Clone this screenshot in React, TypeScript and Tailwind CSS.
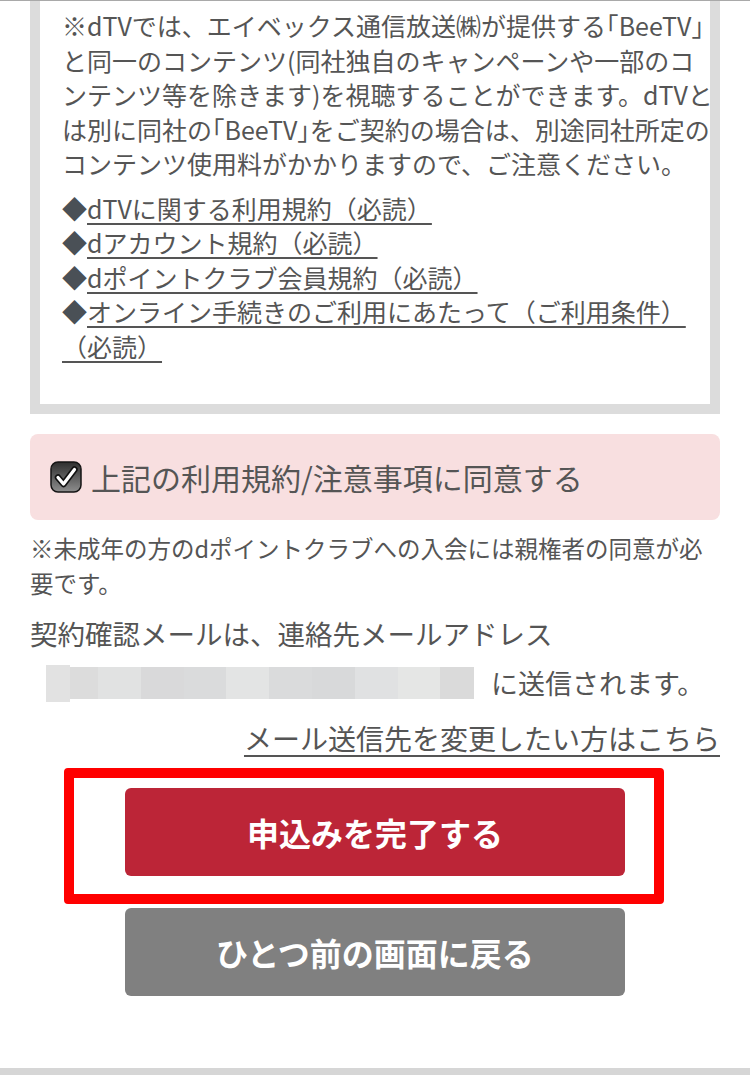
import type { ReactNode } from 'react';

// half-width bracket, as the reference renders 「」 narrow
function Br({ children }: { children: ReactNode }) {
  return <span className="[font-feature-settings:'halt']">{children}</span>;
}

const terms: Array<ReactNode> = [
  'dTVに関する利用規約（必読）',
  'dアカウント規約（必読）',
  'dポイントクラブ会員規約（必読）',
];

const mosaic: Array<{ w: number; c: string; tall?: boolean }> = [
  { w: 24, c: '#e2e2e2', tall: true },
  { w: 28, c: '#dcdcdc' },
  { w: 43, c: '#e1e2e2' },
  { w: 43, c: '#d9d9da' },
  { w: 42, c: '#dadbdc' },
  { w: 43, c: '#e3e4e4' },
  { w: 43, c: '#dadbdc' },
  { w: 43, c: '#d8d9da' },
  { w: 43, c: '#e0e1e2' },
  { w: 42, c: '#e5e6e5' },
  { w: 34, c: '#dadada' },
];

function CheckIcon() {
  return (
    <svg width="32" height="32" viewBox="0 0 32 32" className="shrink-0">
      <defs>
        <linearGradient id="cb-bg" x1="0" y1="0" x2="0" y2="1">
          <stop offset="0" stopColor="#2e2e2e" />
          <stop offset="1" stopColor="#8e8e8e" />
        </linearGradient>
      </defs>
      <rect x="1" y="1" width="30" height="30" rx="7" fill="url(#cb-bg)" stroke="#151515" strokeWidth="1.5" />
      <path d="M8 16.5 L13.5 23 L24.5 8.5" fill="none" stroke="#111" strokeWidth="6.5" strokeLinecap="round" strokeLinejoin="round" />
      <path d="M8 16.5 L13.5 23 L24.5 8.5" fill="none" stroke="#fff" strokeWidth="3.2" strokeLinecap="round" strokeLinejoin="round" />
    </svg>
  );
}

export default function App() {
  return (
    <div className="w-[750px] bg-white font-['Noto_Sans_CJK_JP',sans-serif] text-[#555]">
      <div className="h-px bg-[#a9a9a9]" />

      <div className="flex flex-col px-[30px]">
        {/* Terms frame (scrolled, top cut off) */}
        <div className="border-x-[10px] border-b-[10px] border-[#dcdcdc] pl-[22px] pr-[2px] pt-[7px] pb-[41px] text-[25px] leading-[34.5px]">
          <p className="whitespace-nowrap">
            ※dTVでは、エイベックス通信放送㈱が提供する<Br>「</Br>BeeTV<Br>」</Br>
            <br />
            と同一のコンテンツ(同社独自のキャンペーンや一部のコ
            <br />
            ンテンツ等を除きます)を視聴することができます。dTVと
            <br />
            は別に同社の<Br>「</Br>BeeTV<Br>」</Br>をご契約の場合は、別途同社所定の
            <br />
            コンテンツ使用料がかかりますので、ご注意ください。
          </p>

          <div className="mt-[10px] whitespace-nowrap">
            {terms.map((t, i) => (
              <p key={i}>
                <span className="text-[#4a5056]">◆</span>
                <a className="underline underline-offset-[4px]">{t}</a>
              </p>
            ))}
            <p>
              <span className="text-[#4a5056]">◆</span>
              <a className="underline underline-offset-[4px]">
                オンライン手続きのご利用にあたって（ご利用条件）
                <br />
                （必読）
              </a>
            </p>
          </div>
        </div>

        {/* Agreement */}
        <label className="mt-[20px] flex h-[86px] items-center gap-[9px] rounded-[8px] bg-[#f8dfe0] pl-[20px]">
          <CheckIcon />
          <span className="text-[30px] leading-none">上記の利用規約/注意事項に同意する</span>
        </label>

        <p className="mt-[11px] whitespace-nowrap text-[23.5px] leading-[35px]">
          ※未成年の方のdポイントクラブへの入会には親権者の同意が必
          <br />
          要です。
        </p>

        {/* Mail notice */}
        <div className="mt-[12px] text-[27.5px]">
          <p className="leading-[40px]">契約確認メールは、連絡先メールアドレス</p>
          <div className="mt-[10px] flex h-[40px] items-center">
            <div className="ml-[16px] flex items-center">
              {mosaic.map((m, i) => (
                <div
                  key={i}
                  className={m.tall ? 'h-[37px]' : 'h-[32px]'}
                  style={{ width: m.w, backgroundColor: m.c }}
                />
              ))}
            </div>
            <span className="ml-[17px] text-[27px]">に送信されます。</span>
          </div>
        </div>

        <p className="mt-[15px] text-right text-[28px] leading-[40px]">
          <a className="underline underline-offset-[5px]">メール送信先を変更したい方はこちら</a>
        </p>

        {/* Buttons */}
        <div className="mt-[10px] ml-[34px] w-[600px] rounded-[4px] border-[10px] border-[#ff0000] pt-[10px] pr-[29px] pb-[18px] pl-[51px]">
          <button className="flex h-[88px] w-[500px] items-center justify-center rounded-[6px] bg-[#bc2537] text-[32px] font-bold text-white">
            申込みを完了する
          </button>
        </div>
        <button className="mx-auto mt-[4px] flex h-[88px] w-[500px] items-center justify-center rounded-[6px] bg-[#808080] text-[32px] font-bold text-white">
          ひとつ前の画面に戻る
        </button>
      </div>

      <div className="mt-[72px] h-[20px] bg-[#d6d6d6]" />
    </div>
  );
}
